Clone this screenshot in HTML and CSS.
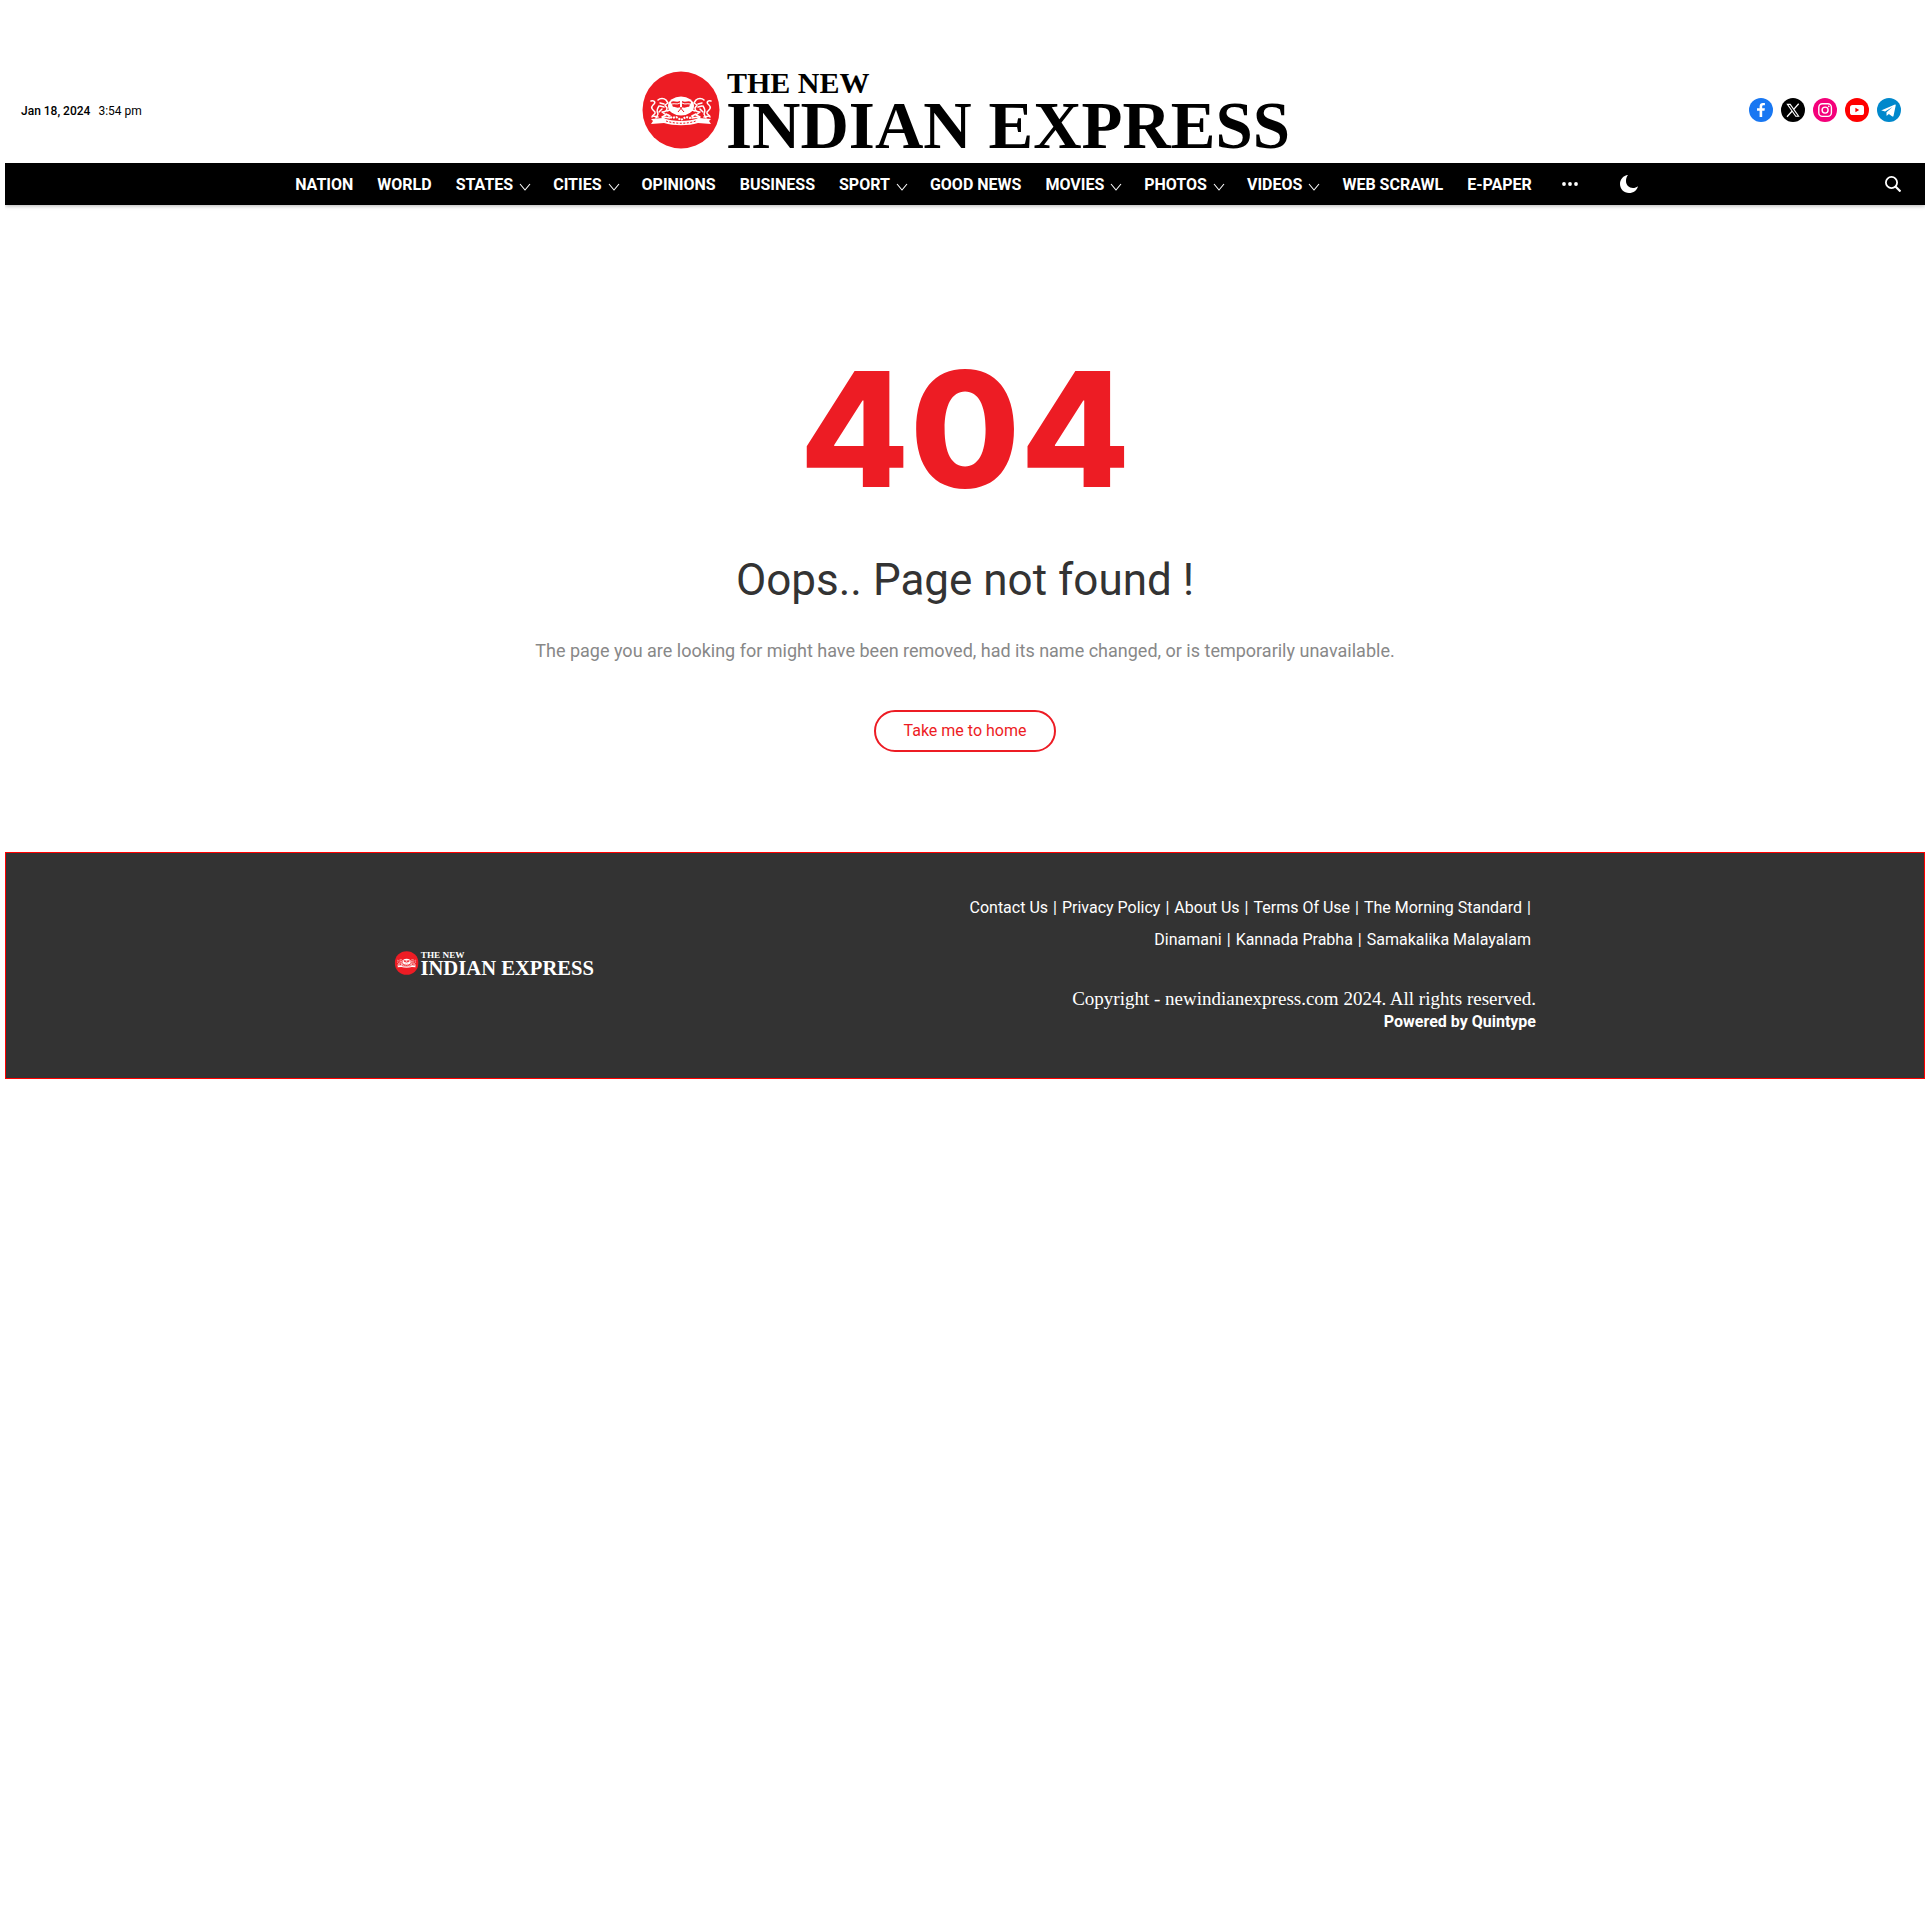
FILE: index.html
```
<!DOCTYPE html>
<html lang="en">
<head>
<meta charset="utf-8">
<meta name="viewport" content="width=device-width, initial-scale=1">
<title>Page not found - The New Indian Express</title>
<link rel="stylesheet" href="styles.css">
</head>
<body>
<svg class="defs" aria-hidden="true">
  <symbol id="chevron" viewBox="0 0 12 8"><path d="M1 1l5 6 5-6" fill="none" stroke="#fff" stroke-width="1.1"/></symbol>
  <symbol id="crest" viewBox="0 0 78 78">
    <circle cx="39" cy="39" r="38.5" fill="#ed1c24"/>
    <g id="lion" fill="none" stroke="#fff" stroke-width="1.5" stroke-linecap="round" stroke-linejoin="round">
      <path d="M16 29c2-2 6-2 8 0l2 3-3 2 2 3c0 3-2 4-5 4l4 3-4 2 3 3h-6"/>
      <path d="M18 32l4 1M18 35l4 1M17 35c-2 3-3 5-1 8l-2 4M20 38l-3 3"/>
      <path d="M9 30c4-1 5 2 2 4-3 3 0 5 2 7 1 3-3 2-3 5"/>
      <path d="M25 40l3-1M24 43l4 2M21 46l7 1M11 45l5 1"/>
    </g>
    <use href="#lion" transform="matrix(-1 0 0 1 78 0)"/>
    <ellipse cx="39" cy="35" rx="13" ry="9.5" fill="#fff"/>
    <path d="M29 31c3-2 5 1 9-1v6c-3 2-5-1-7 0zM49 31c-3-2-5 1-9-1v6c3 2 5-1 7 0z" fill="#ed1c24"/>
    <path d="M30 33c3-1 5 1 8-1M48 33c-3-1-5 1-8-1" fill="none" stroke="#fff"/>
    <path d="M36 41l5-6M42 41l-5-6" stroke="#ed1c24"/>
    <path d="M26 44l4 3 4-1 5 3 5-3 4 1 4-3" fill="none" stroke="#fff" stroke-width="2" stroke-dasharray="2 1"/>
    <path d="M9 48l12-1c10 4 26 4 36 0l12 1-2 2 2 3-13-1c-10 3-24 3-34 0L9 53l2-3z" fill="#fff"/>
    <path d="M24 50c9 3 21 3 30 0" fill="none" stroke="#ed1c24" stroke-dasharray="2 1.5"/>
  </symbol>
</svg>

<header class="header">
  <div class="masthead">
    <div class="date"><strong>Jan 18, 2024</strong><span>3:54 pm</span></div>
    <a class="logo" href="#" aria-label="The New Indian Express">
      <svg viewBox="0 0 646 78">
        <use href="#crest" width="78" height="78"/>
        <text class="brand-text" x="85" y="22" font-size="30">THE NEW</text>
        <text class="brand-text" x="84" y="77" font-size="67">INDIAN EXPRESS</text>
      </svg>
    </a>
    <div class="social">
      <a href="#" aria-label="Facebook"><svg viewBox="0 0 24 24"><circle cx="12" cy="12" r="12" fill="#1877f2"/><path d="M10.600 19v-6.200H8v-2.600h2.600V8.400c0-2.200 1.300-3.400 3.300-3.400.8 0 2 .1 2 .1v2.200h-1.400c-1 0-1.300.6-1.300 1.300v1.600h2.700l-.4 2.600h-2.300V19z" fill="#fff"/></svg></a>
      <a href="#" aria-label="X"><svg viewBox="0 0 24 24"><circle cx="12" cy="12" r="12"/><path d="M6.400 6.400h2.800l8.400 11.800h-2.800z" fill="none" stroke="#fff" stroke-width="1.1"/><path d="M17.700 5.800l-5 5.600M11 13.200l-5 5.500" stroke="#fff" stroke-width="1.3"/></svg></a>
      <a href="#" aria-label="Instagram"><svg viewBox="0 0 24 24"><circle cx="12" cy="12" r="12" fill="#f4007a"/><rect x="5.800" y="5.800" width="12.600" height="12.600" rx="3.600" fill="none" stroke="#fff" stroke-width="1.4"/><circle cx="12.100" cy="12.100" r="3" fill="none" stroke="#fff" stroke-width="1.4"/><circle cx="15.800" cy="8.400" r=".8" fill="#fff"/></svg></a>
      <a href="#" aria-label="YouTube"><svg viewBox="0 0 24 24"><circle cx="12" cy="12" r="12" fill="red"/><rect x="5" y="7" width="14" height="10" rx="2.600" fill="#fff"/><path d="M10.400 9.800v4.400l3.800-2.200z" fill="red"/></svg></a>
      <a href="#" aria-label="Telegram"><svg viewBox="0 0 24 24"><circle cx="12" cy="12" r="12" fill="#08c"/><path d="M4.600 12.200L18 6.600c.5-.2.900.1.700.9l-2.200 10.400c-.2.700-.6.900-1.200.5l-3.400-2.500-1.800 1.700c-.3.300-.6.200-.6-.3v-3l6-5.400-7.400 4.700-3.300-1.100c-.7-.2-.7-.2-.2-.3z" fill="#fff"/></svg></a>
    </div>
  </div>
  <nav class="nav" aria-label="Sections">
    <ul class="menu">
      <li><a href="#">NATION</a></li>
      <li><a href="#">WORLD</a></li>
      <li><a href="#">STATES<svg><use href="#chevron"/></svg></a></li>
      <li><a href="#">CITIES<svg><use href="#chevron"/></svg></a></li>
      <li><a href="#">OPINIONS</a></li>
      <li><a href="#">BUSINESS</a></li>
      <li><a href="#">SPORT<svg><use href="#chevron"/></svg></a></li>
      <li><a href="#">GOOD NEWS</a></li>
      <li><a href="#">MOVIES<svg><use href="#chevron"/></svg></a></li>
      <li><a href="#">PHOTOS<svg><use href="#chevron"/></svg></a></li>
      <li><a href="#">VIDEOS<svg><use href="#chevron"/></svg></a></li>
      <li><a href="#">WEB SCRAWL</a></li>
      <li><a href="#">E-PAPER</a></li>
    </ul>
    <button class="icon-button more" type="button" aria-label="More sections"><svg width="16" height="16" viewBox="0 0 16 16" fill="#fff"><circle cx="2" cy="8" r="1.900"/><circle cx="8" cy="8" r="1.900"/><circle cx="14" cy="8" r="1.900"/></svg></button>
    <button class="icon-button theme" type="button" aria-label="Dark mode"><svg width="18" height="18" viewBox="0 0 18 18"><path d="M8 0C3.300.5 0 4.300 0 9c0 5 4 9 9 9 4.500 0 8-2.800 9-6.800-1.500 1.200-3.200 1.800-5 1.800-4 0-7-3-7-7 0-2.300.7-4.400 2-6z" fill="#fff"/></svg></button>
    <button class="icon-button search" type="button" aria-label="Search"><svg width="16" height="16" viewBox="0 0 16 16" fill="none" stroke="#fff" stroke-width="1.800"><circle cx="6.500" cy="6.500" r="5.600"/><path d="M10.500 10.500l5 5" stroke-width="2.200"/></svg></button>
  </nav>
</header>

<main class="error">
  <h1>404</h1>
  <h2>Oops.. Page not found !</h2>
  <p>The page you are looking for might have been removed, had its name changed, or is temporarily unavailable.</p>
  <a class="home" href="#">Take me to home</a>
</main>

<footer class="footer">
  <div class="footer-inner">
    <a class="footer-logo" href="#" aria-label="The New Indian Express">
      <svg viewBox="0 0 646 78">
        <use href="#crest" width="78" height="78"/>
        <text class="brand-text" x="85" y="22" font-size="30">THE NEW</text>
        <text class="brand-text" x="84" y="77" font-size="67">INDIAN EXPRESS</text>
      </svg>
    </a>
    <div class="footer-info">
      <ul class="links">
        <li><a href="#">Contact Us</a></li>
        <li><a href="#">Privacy Policy</a></li>
        <li><a href="#">About Us</a></li>
        <li><a href="#">Terms Of Use</a></li>
        <li><a href="#">The Morning Standard</a></li>
        <li><a href="#">Dinamani</a></li>
        <li><a href="#">Kannada Prabha</a></li>
        <li><a href="#">Samakalika Malayalam</a></li>
      </ul>
      <p class="copyright">Copyright - newindianexpress.com 2024. All rights reserved.</p>
      <a class="powered" href="#">Powered by Quintype</a>
    </div>
  </div>
</footer>
</body>
</html>
```
FILE: styles.css
```
* {
  box-sizing: border-box;
}

body {
  margin: 0;
  padding: 0 5px;
  background: #fff;
  color: #333;
  font-family: Roboto, "Liberation Sans", sans-serif;
  font-size: 16px;
}

a {
  color: inherit;
  text-decoration: none;
}

ul {
  margin: 0;
  padding: 0;
  list-style: none;
}

svg {
  display: block;
}

.defs {
  position: absolute;
  width: 0;
  height: 0;
}

.brand-text {
  font-family: "Liberation Serif", serif;
  font-weight: 700;
  fill: currentColor;
}

.header {
  box-shadow: 0 1px 4px rgba(0, 0, 0, 0.3);
  clip-path: inset(0 0 -8px 0);
}

.masthead {
  display: grid;
  grid-template-columns: 1fr auto 1fr;
  align-items: center;
  padding: 71px 16px 14px;
}

.date {
  display: flex;
  gap: 8px;
  padding-top: 1px;
  color: #000;
  font-size: 12px;
}

.date strong {
  font-weight: 500;
}

.logo {
  color: #000;
}

.logo svg,
.footer-logo svg {
  overflow: visible;
}

.logo svg {
  width: 646px;
  height: 78px;
}

.social {
  display: flex;
  justify-content: flex-end;
  gap: 8px;
  padding-right: 8px;
}

.social svg {
  width: 24px;
  height: 24px;
}

.nav {
  display: flex;
  align-items: center;
  height: 42px;
  padding: 0 24px 0 43px;
  background: #000;
  color: #fff;
}

.menu {
  display: flex;
  gap: 24px;
  margin-left: auto;
  font-weight: 700;
  white-space: nowrap;
}

.menu a {
  display: flex;
  align-items: center;
}

.menu svg {
  width: 12px;
  height: 8px;
  margin: 6px -2px 0 6px;
}

.icon-button {
  flex: none;
  padding: 0;
  border: 0;
  background: none;
}

.more {
  margin-left: 30px;
}

.theme {
  margin-left: 42px;
}

.search {
  width: 16px;
  margin-left: auto;
}

.error {
  display: flex;
  flex-direction: column;
  align-items: center;
  padding: 120px 16px 100px;
  text-align: center;
}

.error h1 {
  margin: 0;
  color: #ed1c24;
  font-family: Inter, sans-serif;
  font-size: 160px;
  font-weight: 800;
  line-height: 208px;
}

.error h2 {
  margin: 20px 0 32px;
  font-size: 44px;
  font-weight: 400;
  line-height: 54px;
}

.error p {
  margin: 0 0 47px;
  color: #888;
  font-size: 18px;
  line-height: 24px;
}

.home {
  padding: 10px 28px;
  border: 2px solid #ed1c24;
  border-radius: 21px;
  color: #ed1c24;
  line-height: 18px;
}

.footer {
  border: 1px solid #f00;
  background: #333;
  color: #fff;
}

.footer-inner {
  display: grid;
  grid-template-columns: 1fr 1fr;
  align-items: center;
  max-width: 1142px;
  margin: 0 auto;
  padding: 39px 0 45px;
}

.footer-logo svg {
  width: 200px;
  height: 24px;
}

.footer-info {
  display: flex;
  flex-direction: column;
  align-items: flex-end;
}

.links {
  display: flex;
  flex-wrap: wrap;
  justify-content: flex-end;
  padding-right: 5px;
  line-height: 32px;
}

.links li:not(:last-child)::after {
  content: "|";
  padding: 0 5px;
}

.links li:nth-child(5)::after {
  padding-right: 0;
}

.copyright {
  margin: 31px 0 0;
  font-family: "Liberation Serif", serif;
  font-size: 19px;
  line-height: 24px;
}

.powered {
  font-weight: 700;
  line-height: 22px;
}
```
